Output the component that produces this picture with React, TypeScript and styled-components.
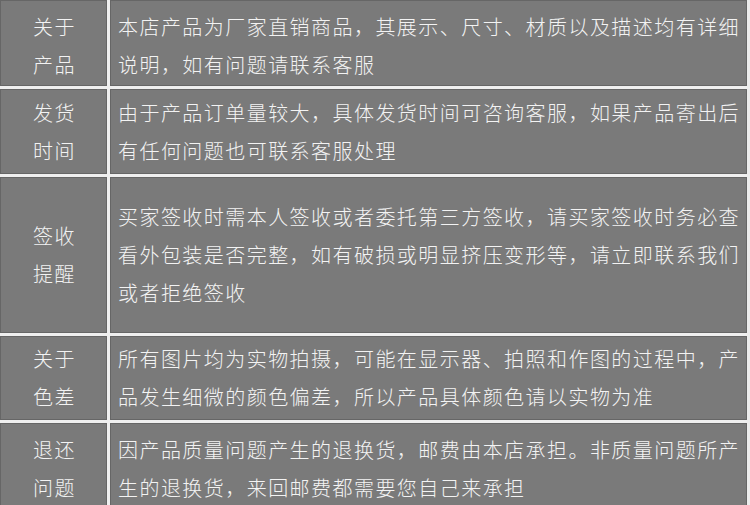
import styled, { createGlobalStyle } from "styled-components";

const GlobalStyle = createGlobalStyle`
  html, body {
    margin: 0;
    padding: 0;
    background: #ececec;
    overflow: hidden;
  }
  body {
    font-family: "Noto Sans CJK SC", "Noto Sans", sans-serif;
  }
`;

type Row = {
  label: [string, string];
  text: string;
  height: number;
  offset?: number;
};

const rows: Row[] = [
  {
    label: ["关于", "产品"],
    text: "本店产品为厂家直销商品，其展示、尺寸、材质以及描述均有详细说明，如有问题请联系客服",
    height: 86,
    offset: 6,
  },
  {
    label: ["发货", "时间"],
    text: "由于产品订单量较大，具体发货时间可咨询客服，如果产品寄出后有任何问题也可联系客服处理",
    height: 85,
  },
  {
    label: ["签收", "提醒"],
    text: "买家签收时需本人签收或者委托第三方签收，请买家签收时务必查看外包装是否完整，如有破损或明显挤压变形等，请立即联系我们或者拒绝签收",
    height: 156,
  },
  {
    label: ["关于", "色差"],
    text: "所有图片均为实物拍摄，可能在显示器、拍照和作图的过程中，产品发生细微的颜色偏差，所以产品具体颜色请以实物为准",
    height: 84,
  },
  {
    label: ["退还", "问题"],
    text: "因产品质量问题产生的退换货，邮费由本店承担。非质量问题所产生的退换货，来回邮费都需要您自己来承担",
    height: 92,
  },
];

export default function App() {
  return (
    <>
      <GlobalStyle />
      <Table>
        {rows.map((r, i) => (
          <TableRow key={i} $h={r.height}>
            <LabelCell $offset={r.offset ?? 0}>
              <Label>
                {r.label[0]}
                <br />
                {r.label[1]}
              </Label>
            </LabelCell>
            <TextCell $offset={r.offset ?? 0}>
              <Text>{r.text}</Text>
            </TextCell>
          </TableRow>
        ))}
      </Table>
    </>
  );
}

const Table = styled.div`
  width: 747px;
  display: flex;
  flex-direction: column;
  gap: 3px;
  background: #efefef;
`;

const TableRow = styled.div<{ $h: number }>`
  display: grid;
  grid-template-columns: 107px 1fr;
  column-gap: 3px;
  height: ${({ $h }) => $h}px;
`;

const Cell = styled.div<{ $offset: number }>`
  background: #7a7a7a;
  box-shadow: inset 0 0 0 1px #666666;
  display: flex;
  align-items: center;
  padding-top: ${({ $offset }) => $offset}px;
  box-sizing: border-box;
  color: #f3f3f3;
  font-size: 20px;
  font-weight: 300;
  line-height: 38px;
  letter-spacing: 1.45px;
`;

const LabelCell = styled(Cell)`
  justify-content: center;
  padding-left: 2px;
`;

const TextCell = styled(Cell)`
  padding-left: 8px;
  padding-right: 6px;
`;

const Label = styled.div`
  text-align: center;
`;

const Text = styled.div`
  width: 100%;
`;
